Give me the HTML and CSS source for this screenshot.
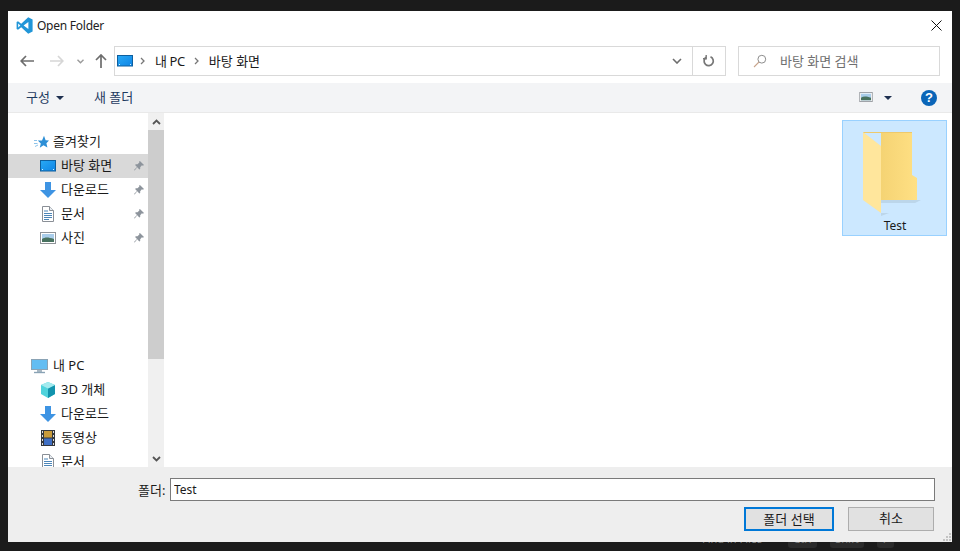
FILE: index.html
```html
<!DOCTYPE html>
<html lang="ko">
<head>
<meta charset="utf-8">
<title>Open Folder</title>
<link rel="stylesheet" href="styles.css">
</head>
<body>
<svg class="defs" width="0" height="0" aria-hidden="true">
  <defs>
    <linearGradient id="dsk" x1="0" y1="0" x2="1" y2="1"><stop offset="0" stop-color="#28a8f5"/><stop offset="1" stop-color="#0f86e6"/></linearGradient>
    <linearGradient id="fld" x1="0" y1="0" x2="1" y2="0"><stop offset="0" stop-color="#f0cd6c"/><stop offset="1" stop-color="#ffe084"/></linearGradient>
    <symbol id="desktop" viewBox="0 0 16 12"><rect x="0" y="0" width="16" height="11.500" fill="#0e5f9e"/><rect x="1" y="1" width="14" height="9.500" fill="url(#dsk)"/><rect x="13" y="9" width="1" height="1" fill="#d7eefc"/><rect x="2" y="9" width="1" height="1" fill="#d7eefc"/></symbol>
    <symbol id="down" viewBox="0 0 16 16"><path d="M5 0h6v8h5L8 16 0 8h5z" fill="#3e94e3"/></symbol>
    <symbol id="doc" viewBox="0 0 14 16"><path d="M1.500.5h7l4 4v11h-11z" fill="#fff" stroke="#8a8f96"/><path d="M8.500.5v4h4" fill="#e8edf2" stroke="#8a8f96"/><path d="M3 5h4M3 7.500h8M3 9.500h8M3 11.500h8M3 13.500h5" stroke="#4d86b8"/></symbol>
    <symbol id="pic" viewBox="0 0 16 12"><rect x=".5" y=".5" width="15" height="11" fill="#fff" stroke="#8f9398"/><rect x="2" y="2" width="12" height="8" fill="#a9cdea"/><path d="M2 7c3-2 6-2 12 0v3H2z" fill="#48725f"/></symbol>
    <symbol id="pin" viewBox="0 0 11 11"><path d="M6.500 0 11 4.500 9.800 5.200 8.700 4.800 6.800 6.800 6.800 8.700 5.800 9.300 3.600 7 .7 10.500 0 10 3.300 6.600 1.200 4.500 2 3.500 3.900 3.700 5.900 1.700 5.700.6z" fill="#8d949c"/></symbol>
  </defs>
</svg>
<main class="dialog">
  <header class="titlebar">
    <svg class="vscode" width="17" height="17" viewBox="0 0 17 17"><path d="M12.200.3 16.600 2.400v12.200l-4.400 2.100L5.200 10.200 2 12.800.6 12V5l1.400-.8 3.200 2.600z" fill="#2196d8"/><path d="M12.400 5 7.600 8.500l4.800 3.500z" fill="#fff"/><path d="M2.200 6.400 4.300 8.500 2.200 10.600z" fill="#fff"/></svg>
    <span class="title">Open Folder</span>
    <svg class="close" width="11" height="11" viewBox="0 0 11 11"><path d="M.5.5l10 10M10.500.5l-10 10" stroke="#111" stroke-width="1"/></svg>
  </header>
  <nav class="navbar">
    <svg class="nav-icon back" width="14" height="12" viewBox="0 0 14 12"><path d="M6 1 1.200 6 6 11M1.500 6H14" fill="none" stroke="#6d6d6d" stroke-width="1.700"/></svg>
    <svg class="nav-icon fwd" width="14" height="12" viewBox="0 0 14 12"><path d="M8 1l4.800 5L8 11M12.500 6H0" fill="none" stroke="#d6d6d6" stroke-width="1.700"/></svg>
    <svg class="nav-icon drop" width="7" height="5" viewBox="0 0 7 5"><path d="M.5.800 3.500 3.800 6.500.800" fill="none" stroke="#9a9a9a" stroke-width="1.400"/></svg>
    <svg class="nav-icon up" width="12" height="14" viewBox="0 0 12 14"><path d="M1 6l5-5 5 5M6 1.500V14" fill="none" stroke="#6d6d6d" stroke-width="1.700"/></svg>
    <div class="address">
      <svg class="addr-pc" width="16" height="12"><use href="#desktop"/></svg>
      <svg class="chev" width="5" height="8" viewBox="0 0 5 8"><path d="M1 1l3 3-3 3" fill="none" stroke="#777" stroke-width="1.300"/></svg>
      <span class="crumb crumb-pc">내 PC</span>
      <svg class="chev" width="5" height="8" viewBox="0 0 5 8"><path d="M1 1l3 3-3 3" fill="none" stroke="#777" stroke-width="1.300"/></svg>
      <span class="crumb">바탕 화면</span>
      <svg class="addr-drop" width="10" height="6" viewBox="0 0 10 6"><path d="M1 1l4 4 4-4" fill="none" stroke="#6d6d6d" stroke-width="1.600"/></svg>
      <span class="addr-refresh">
        <svg width="12" height="12" viewBox="0 0 12 12"><path d="M7.500 1.800A4.600 4.600 0 1 1 3 2.300" fill="none" stroke="#777" stroke-width="1.700"/><path d="M3.200 0v3.800H0" fill="none" stroke="#777" stroke-width="1.400"/></svg>
      </span>
    </div>
    <div class="search">
      <svg width="14" height="14" viewBox="0 0 14 14"><circle cx="8.800" cy="5.200" r="3.900" fill="none" stroke="#8d8d8d"/><path d="M6 8 1 13" stroke="#c9a58d" stroke-width="1.100"/></svg>
      <span class="search-text">바탕 화면 검색</span>
    </div>
  </nav>
  <div class="toolbar">
    <span class="tool"><span class="tool-text">구성</span><i class="caret"></i></span>
    <span class="tool newfolder"><span class="tool-text">새 폴더</span></span>
    <span class="spacer"></span>
    <svg class="view" width="14" height="10"><use href="#pic"/></svg>
    <i class="caret view-caret"></i>
    <span class="help">?</span>
  </div>
  <section class="content">
    <aside class="tree">
      <ul class="tree-list">
        <li class="row top"><svg class="i-star" width="15" height="14" viewBox="0 0 15 14"><path d="M10 .8l1.600 4.400 3.400.2-2.600 2.800 1 4.400-3.900-2.400-3.700 2.600 1-4.400-3-2.800 4.200-.2z" fill="#2d8fd6"/><path d="M0 5.500h3M0 8.500h3.500M1 11.500l3-1.500" stroke="#8cc3ea"/></svg><span>즐겨찾기</span></li>
        <li class="row sub selected"><svg width="16" height="12"><use href="#desktop"/></svg><span>바탕 화면</span><svg class="pin" width="10" height="10"><use href="#pin"/></svg></li>
        <li class="row sub"><svg width="16" height="16"><use href="#down"/></svg><span>다운로드</span><svg class="pin" width="10" height="10"><use href="#pin"/></svg></li>
        <li class="row sub"><svg width="16" height="16"><use href="#doc"/></svg><span>문서</span><svg class="pin" width="10" height="10"><use href="#pin"/></svg></li>
        <li class="row sub"><svg width="16" height="12"><use href="#pic"/></svg><span>사진</span><svg class="pin" width="10" height="10"><use href="#pin"/></svg></li>
        <li class="row top pc"><svg class="i-pc" width="17" height="15" viewBox="0 0 17 15"><rect x=".5" y=".5" width="16" height="10" fill="#63bdf2" stroke="#8aa3b5"/><path d="M6 11h5v2H6z" fill="#a9b8c3"/><path d="M3 13.500h11" stroke="#8aa3b5" stroke-width="1.400"/></svg><span>내 PC</span></li>
        <li class="row sub"><svg width="16" height="16" viewBox="0 0 16 16"><path d="M8 0l7 3v9l-7 4-7-4V3z" fill="#4fd3dc"/><path d="M8 6.500 15 3v9l-7 4z" fill="#1293ad"/><path d="M8 6.500 1 3l7-3 7 3z" fill="#a3eaee"/></svg><span>3D 개체</span></li>
        <li class="row sub"><svg width="16" height="16"><use href="#down"/></svg><span>다운로드</span></li>
        <li class="row sub"><svg class="film" width="14" height="16" viewBox="0 0 14 16"><rect width="14" height="16" fill="#33373c"/><path d="M3 1h8v6.500H3z" fill="#c79a3a"/><path d="M3 8.500h8V15H3z" fill="#3f6fc4"/><path d="M1 1h1v2H1zM1 5h1v2H1zM1 9h1v2H1zM1 13h1v2H1zM12 1h1v2h-1zM12 5h1v2h-1zM12 9h1v2h-1zM12 13h1v2h-1z" fill="#ddd"/></svg><span>동영상</span></li>
        <li class="row sub"><svg width="16" height="16"><use href="#doc"/></svg><span>문서</span></li>
      </ul>
    </aside>
    <div class="scrollbar">
      <span class="scroll-btn"><svg width="9" height="6" viewBox="0 0 9 6"><path d="M1 5l3.500-3.500L8 5" fill="none" stroke="#555" stroke-width="1.800"/></svg></span>
      <span class="thumb"></span>
      <span class="scroll-btn scroll-end"><svg width="9" height="6" viewBox="0 0 9 6"><path d="M1 1l3.500 3.500L8 1" fill="none" stroke="#555" stroke-width="1.800"/></svg></span>
    </div>
    <div class="files">
      <figure class="folder">
        <svg width="60" height="84" viewBox="0 0 60 84"><path d="M18 68h40l-6 3H18z" fill="#bcd6ea"/><path d="M18 81h8l-8 3z" fill="#bcd6ea"/><path d="M1 0h48v43l5 3v22H18V0z" fill="url(#fld)"/><path d="M0 0 18 14V81L0 68z" fill="#ffe69c"/><path d="M0 0h49v1H1z" fill="#eec96b"/></svg>
        <figcaption>Test</figcaption>
      </figure>
    </div>
  </section>
  <footer class="bottom">
    <div class="name-row">
      <label class="name-label" for="name">폴더:</label>
      <input class="name-input" id="name" value="Test">
    </div>
    <div class="buttons">
      <button class="btn primary">폴더 선택</button>
      <button class="btn">취소</button>
    </div>
    <svg class="grip" width="8" height="8" viewBox="0 0 8 8"><path d="M6 0h2v2H6zM3 3h2v2H3zM6 3h2v2H6zM0 6h2v2H0zM3 6h2v2H3zM6 6h2v2H6z" fill="#c3c3c3"/></svg>
  </footer>
</main>
<div class="behind"><span class="behind-text">Find in Files</span><kbd class="k1">Ctrl</kbd><span class="plus">+</span><kbd class="k2">Shift</kbd><span class="plus">+</span><kbd class="k3">F</kbd></div>
</body>
</html>
```
FILE: styles.css
```css
* { box-sizing: border-box; }
html, body { margin: 0; height: 551px; overflow: hidden; }
body {
  background: #1b1b1b;
  padding-top: 11px;
  font-family: "Noto Sans", "Noto Sans CJK KR", sans-serif;
  font-size: 13px;
  color: #1a1a1a;
  display: flex;
  flex-direction: column;
}
.defs { position: absolute; }
svg { display: block; flex: none; }
.dialog {
  position: relative;
  margin: 0 8px;
  height: 531px;
  flex: none;
  background: #fff;
  display: flex;
  flex-direction: column;
}
.titlebar {
  height: 28px;
  display: flex;
  align-items: center;
  padding: 0 10px 0 8px;
  flex: none;
}
.title { margin: 2px 0 0 4px; flex: 1; font-size: 12px; letter-spacing: -0.25px; line-height: 26px; color: #222; }
.navbar {
  height: 44px;
  flex: none;
  display: flex;
  align-items: center;
  padding: 0 12px;
}
.nav-icon { flex: none; }
.fwd { margin-left: 16px; }
.drop { margin-left: 13px; }
.up { margin-left: 11px; }
.address {
  margin-left: 7px;
  height: 30px;
  width: 612px;
  border: 1px solid #d9d9d9;
  display: flex;
  align-items: center;
  padding-left: 2px;
}
.addr-pc { margin-right: 7px; }
.chev { margin-right: 10px; }
.crumb { margin: 0 9px 2px 0; }
.crumb-pc { letter-spacing: -0.4px; }
.addr-drop { margin-left: auto; margin-right: 10px; }
.addr-refresh {
  width: 33px;
  height: 100%;
  border-left: 1px solid #d9d9d9;
  display: flex;
  align-items: center;
  justify-content: center;
}
.search {
  margin-left: 12px;
  height: 30px;
  width: 202px;
  border: 1px solid #d9d9d9;
  display: flex;
  align-items: center;
  gap: 13px;
  padding-left: 14px;
  color: #6f6f6f;
}
.search-text { margin-bottom: 2px; }
.toolbar {
  height: 30px;
  flex: none;
  background: #f3f4f6;
  border-bottom: 1px solid #e9e9e9;
  display: flex;
  align-items: center;
  padding: 0 15px 0 18px;
  color: #1e3a5f;
}
.tool { display: flex; align-items: center; }
.tool-text { margin-bottom: 2px; }
.caret {
  display: block;
  width: 0;
  height: 0;
  border-left: 4px solid transparent;
  border-right: 4px solid transparent;
  border-top: 4px solid #1e3050;
  margin-left: 6px;
}
.newfolder { margin-left: 30px; }
.spacer { flex: 1; }
.view { margin-bottom: 2px; }
.view-caret { margin-left: 11px; }
.help {
  margin-left: 29px;
  width: 16px;
  height: 16px;
  border-radius: 50%;
  background: #0a65b8;
  color: #fff;
  font: bold 13px/16px "Liberation Sans", sans-serif;
  text-align: center;
}
.content {
  flex: 1;
  min-height: 0;
  display: flex;
}
.tree {
  width: 140px;
  flex: none;
  overflow: hidden;
}
.tree-list {
  list-style: none;
  margin: 0;
  padding: 17px 0 0;
  display: flex;
  flex-direction: column;
}
.row {
  height: 24px;
  flex: none;
  display: flex;
  align-items: center;
  color: #1a1a1a;
}
.row span { margin-bottom: 4px; }
.row.top { padding-left: 26px; gap: 4px; }
.row.top .i-pc { margin-right: 1px; margin-left: -3px; }
.row.sub { padding-left: 32px; }
.row.sub svg:first-child { margin-right: 5px; }
.row.sub span { flex: 1; white-space: nowrap; }
.row.sub svg.film { margin-left: 1px; margin-right: 6px; }
.pin { margin-right: 4px; }
.selected { background: #d9d9d9; }
.pc { margin-top: 104px; }
.scrollbar {
  width: 16px;
  flex: none;
  background: #f0f0f0;
  display: flex;
  flex-direction: column;
}
.scroll-btn {
  height: 17px;
  flex: none;
  display: flex;
  align-items: center;
  justify-content: center;
}
.thumb {
  height: 229px;
  flex: none;
  background: #cdcdcd;
}
.scroll-end { margin-top: auto; }
.files {
  flex: 1;
  min-width: 0;
  display: flex;
  justify-content: flex-end;
  align-items: flex-start;
  padding: 7px 5px 0 0;
}
.folder {
  margin: 0;
  width: 105px;
  height: 116px;
  background: #cce8ff;
  border: 1px solid #99d1ff;
  display: flex;
  flex-direction: column;
}
.folder svg { margin-top: 11px; margin-left: 20px; }
.folder figcaption { margin-top: 2px; padding-left: 1px; line-height: 16px; font-size: 12px; text-align: center; color: #1a1a1a; }
.bottom {
  position: relative;
  height: 75px;
  flex: none;
  background: #eeeeee;
  display: flex;
  flex-direction: column;
}
.name-row {
  display: flex;
  align-items: center;
  margin-top: 11px;
  height: 23px;
  padding-left: 130px;
}
.name-label { width: 32px; white-space: nowrap; }
.name-input {
  width: 765px;
  height: 23px;
  border: 1px solid #7a7a7a;
  padding: 0 3px;
  margin: 0;
  font: 12px "Noto Sans", "Noto Sans CJK KR", sans-serif;
  color: #1a1a1a;
  background: #fff;
  outline: none;
}
.buttons {
  display: flex;
  justify-content: flex-end;
  gap: 14px;
  padding-right: 18px;
  margin-top: 6px;
}
.btn {
  width: 86px;
  height: 24px;
  margin: 0;
  padding: 0 0 3px;
  border: 1px solid #adadad;
  background: #e1e1e1;
  font: 13px "Noto Sans CJK KR", "Noto Sans", sans-serif;
  color: #1a1a1a;
}
.btn.primary { width: 90px; border: 2px solid #0078d7; }
.grip { position: absolute; right: 1px; bottom: 1px; }
.behind {
  height: 9px;
  flex: none;
  overflow: hidden;
  display: flex;
  padding-left: 702px;
  font-size: 11px;
  line-height: 16px;
  color: #7a7a7a;
}
.behind-text, .plus, .behind kbd { margin-top: -11px; height: 17px; white-space: nowrap; }
.behind-text { width: 86px; }
.plus { width: 13px; text-align: center; }
.behind kbd {
  font: inherit;
  text-align: center;
  background: #2b2b2b;
  border-radius: 3px;
}
.k1 { width: 29px; }
.k2 { width: 34px; }
.k3 { width: 17px; }
```
